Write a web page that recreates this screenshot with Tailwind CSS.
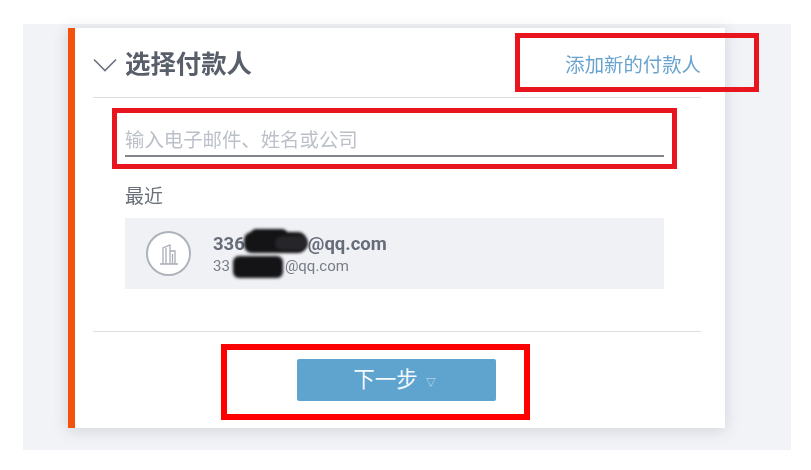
<!DOCTYPE html>
<html lang="zh"><head><meta charset="utf-8">
<script src="https://cdn.jsdelivr.net/npm/@tailwindcss/browser@4"></script>
</head>
<body class="bg-white">
<div class="w-[811px] h-[470px] overflow-hidden pt-[24px] pl-[23px] relative font-['Roboto','Noto_Sans_CJK_SC',sans-serif]">
  <div class="w-[768px] h-[426px] bg-[#f2f3f7] pt-[4px] pl-[45px]">
    <div class="w-[657px] h-[400px] bg-white border-l-[7px] border-[#f4510b] shadow-[0_2px_14px_rgba(90,95,110,0.22)] pl-[18px] pr-[24px] flex flex-col blur-[0.5px]">
      <div class="h-[70px] flex items-center justify-between border-b border-[#dcdee3] shrink-0">
        <div class="flex items-center gap-[8px] mt-[5px]">
          <svg width="24" height="14" viewBox="0 0 24 14" fill="none" stroke="#6b7280" stroke-width="1.6"><path d="M1 1.500 L12 12.500 L23 1.500"/></svg>
          <span class="text-[25.400px] font-bold text-[#585f6b] leading-none">选择付款人</span>
        </div>
        <a class="text-[19.400px] text-[#69a4cf] leading-none mt-[7px]">添加新的付款人</a>
      </div>
      <div class="pl-[32px] pr-[37px] flex-1">
        <div class="mt-[29px] h-[30px] border-b-2 border-[#82868c] text-[19.400px] text-[#bcc0c9] leading-[28px]">输入电子邮件、姓名或公司</div>
        <div class="mt-[28px] text-[19px] text-[#6b7079] leading-[24px]">最近</div>
        <div class="mt-[9px] h-[71px] bg-[#f0f1f5] flex items-center pl-[21px] gap-[22px]">
          <div class="w-[45px] h-[45px] rounded-full border-2 border-[#aeb2bb] bg-white flex items-center justify-center">
            <svg width="20" height="22" viewBox="0 0 20 22" fill="none" stroke="#a9adb6" stroke-width="1.3"><path d="M1 21 H19 M4 21 V5 L11 2 V21 M7 5 V21 M11 8 H16 V21 M13.500 11 V21"/></svg>
          </div>
          <div class="relative">
            <div class="text-[18.500px] font-bold text-[#666c78] leading-[24px]">336<span class="inline-block w-[63px]"></span>@qq.com</div>
            <div class="text-[15px] text-[#777c87] leading-[20px]">33<span class="inline-block w-[55px]"></span>@qq.com</div>
            <div class="absolute left-[31px] top-[0px] w-[62px] h-[21px] bg-[#141416] rounded-[8px] blur-[1.500px]"></div>
            <div class="absolute left-[38px] top-[-3px] w-[36px] h-[10px] bg-[#141416] rounded-full blur-[1.500px]"></div>
            <div class="absolute left-[62px] top-[4px] w-[33px] h-[14px] bg-[#26262a] rounded-full blur-[1.500px]"></div>
            <div class="absolute left-[20px] top-[24px] w-[50px] h-[22px] bg-[#141416] rounded-[6px] blur-[1.500px]"></div>
          </div>
        </div>
      </div>
      <div class="h-[97px] border-t border-[#dcdee3] flex justify-center pt-[27px] pr-[1px] shrink-0">
        <button class="w-[199px] h-[42px] rounded-[2px] bg-[#5fa3cf] text-[#f4f9fc] text-[21.500px] flex items-center justify-center gap-[8px] pr-[4px]">下一步<span class="text-[10px] text-[#cfe3f0] mt-[4px]">▽</span></button>
      </div>
    </div>
  </div>
  <div class="absolute left-[515px] top-[33px] w-[244px] h-[59px] border-[5px] border-[#e8151f]"></div>
  <div class="absolute left-[112px] top-[108px] w-[565px] h-[61px] border-[5px] border-[#e8151f]"></div>
  <div class="absolute left-[221px] top-[344px] w-[309px] h-[76px] border-[6px] border-[#ff0000]"></div>
</div>
</body></html>
